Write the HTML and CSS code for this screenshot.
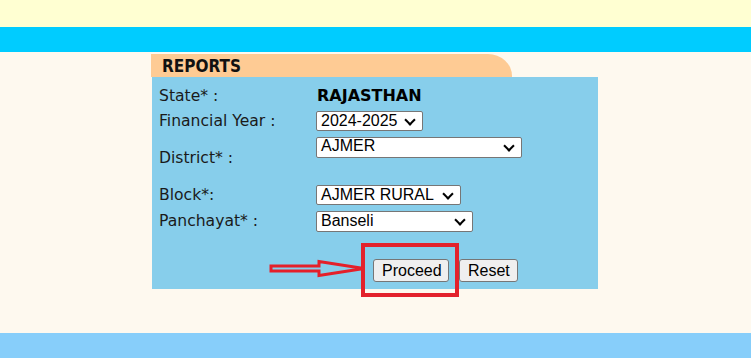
FILE: index.html
```html
<!DOCTYPE html>
<html>
<head>
<meta charset="utf-8">
<link rel="stylesheet" href="styles.css">
</head>
<body>
<div class="top-band"></div>
<div class="cyan-band"></div>
<main class="content">
  <div class="box">
    <div class="tab">REPORTS</div>
    <div class="panel">
      <div class="row r1">
        <div class="label">State* :</div>
        <div class="value state">RAJASTHAN</div>
      </div>
      <div class="row r2">
        <div class="label">Financial Year :</div>
        <div class="value"><div class="sel w-fy">2024-2025<span class="chev"></span></div></div>
      </div>
      <div class="row r3">
        <div class="label">District* :</div>
        <div class="value top"><div class="sel w-dist">AJMER<span class="chev"></span></div></div>
      </div>
      <div class="row r4">
        <div class="label">Block*:</div>
        <div class="value"><div class="sel w-block">AJMER RURAL<span class="chev"></span></div></div>
      </div>
      <div class="row r5">
        <div class="label">Panchayat* :</div>
        <div class="value"><div class="sel w-pan">Banseli<span class="chev"></span></div></div>
      </div>
      <div class="actions">
        <button class="btn b-proceed">Proceed</button>
        <button class="btn b-reset">Reset</button>
        <svg class="arrow" width="100" height="20" viewBox="0 0 100 20">
          <path d="M2 7 L50 7 L50 2.5 L95 9.5 L50 16.5 L50 12 L2 12 Z" fill="none" stroke="#e4202a" stroke-width="3" stroke-linejoin="miter"/>
        </svg>
        <div class="highlight"></div>
      </div>
    </div>
  </div>
</main>
<div class="bottom-band"></div>
</body>
</html>
```

FILE: styles.css
```css
html, body {
  margin: 0;
  padding: 0;
}
body {
  background: #fef9ef;
  font-family: "DejaVu Sans", Verdana, sans-serif;
  width: 751px;
  height: 358px;
  overflow: hidden;
}
.top-band {
  height: 27px;
  background: #ffffd2;
}
.cyan-band {
  height: 25px;
  background: #00ccff;
}
.content {
  height: 281px;
  padding-top: 2px;
  box-sizing: border-box;
}
.box {
  width: 447px;
  margin-left: 151px;
}
.tab {
  width: 361px;
  height: 23px;
  background: #fecb94;
  border-top-right-radius: 24px 22px;
  font-family: "Liberation Sans Narrow", "DejaVu Sans Condensed", "Liberation Sans", sans-serif;
  font-weight: bold;
  font-size: 17px;
  line-height: 25px;
  padding-left: 11px;
  box-sizing: border-box;
  color: #111;
}
.panel {
  margin-left: 1px;
  width: 446px;
  height: 212px;
  background: #87ceeb;
  padding-top: 6px;
  box-sizing: border-box;
  position: relative;
}
.row {
  display: flex;
  align-items: center;
}
.r1 { height: 25px; }
.r2 { height: 26px; }
.r3 { height: 48px; }
.r4 { height: 26px; }
.r5 { height: 26px; }
.label {
  width: 158px;
  padding-left: 7px;
  box-sizing: border-box;
  font-size: 15.6px;
  color: #1a1a1a;
}
.value {
  display: flex;
  align-items: center;
}
.value.top {
  align-self: flex-start;
  padding-top: 3px;
}
.state {
  font-weight: bold;
  font-size: 16px;
  color: #000;
  padding-left: 7px;
}
.sel {
  position: relative;
  height: 20px;
  background: #fff;
  border: 1px solid #767676;
  border-radius: 2px;
  box-sizing: border-box;
  font-family: "Liberation Sans", Arial, sans-serif;
  font-size: 16px;
  line-height: 18px;
  padding-left: 4px;
  color: #000;
  margin-left: 6px;
}
.w-fy { width: 107px; }
.w-dist { width: 206px; height: 21px; line-height: 16px; }
.w-block { width: 145px; }
.w-pan { width: 157px; height: 21px; }
.chev {
  position: absolute;
  right: 8px;
  top: 4px;
  width: 6px;
  height: 6px;
  border-right: 2px solid #000;
  border-bottom: 2px solid #000;
  transform: rotate(45deg);
}
.actions {
  position: relative;
  display: flex;
  padding-left: 221px;
  margin-top: 25px;
  gap: 10px;
}
.btn {
  height: 23px;
  background: #efefef;
  border: 1px solid #767676;
  border-radius: 3px;
  font-family: "Liberation Sans", Arial, sans-serif;
  font-size: 16px;
  color: #000;
  padding: 0 8px;
}
.b-proceed { width: 76px; }
.b-reset { width: 59px; }
.arrow {
  position: absolute;
  left: 117px;
  top: 0px;
}
.highlight {
  position: absolute;
  left: 209px;
  top: -16px;
  width: 98px;
  height: 54px;
  border: 4px solid #e3222c;
  box-sizing: border-box;
}
.bottom-band {
  height: 25px;
  background: #87cefa;
}
```
